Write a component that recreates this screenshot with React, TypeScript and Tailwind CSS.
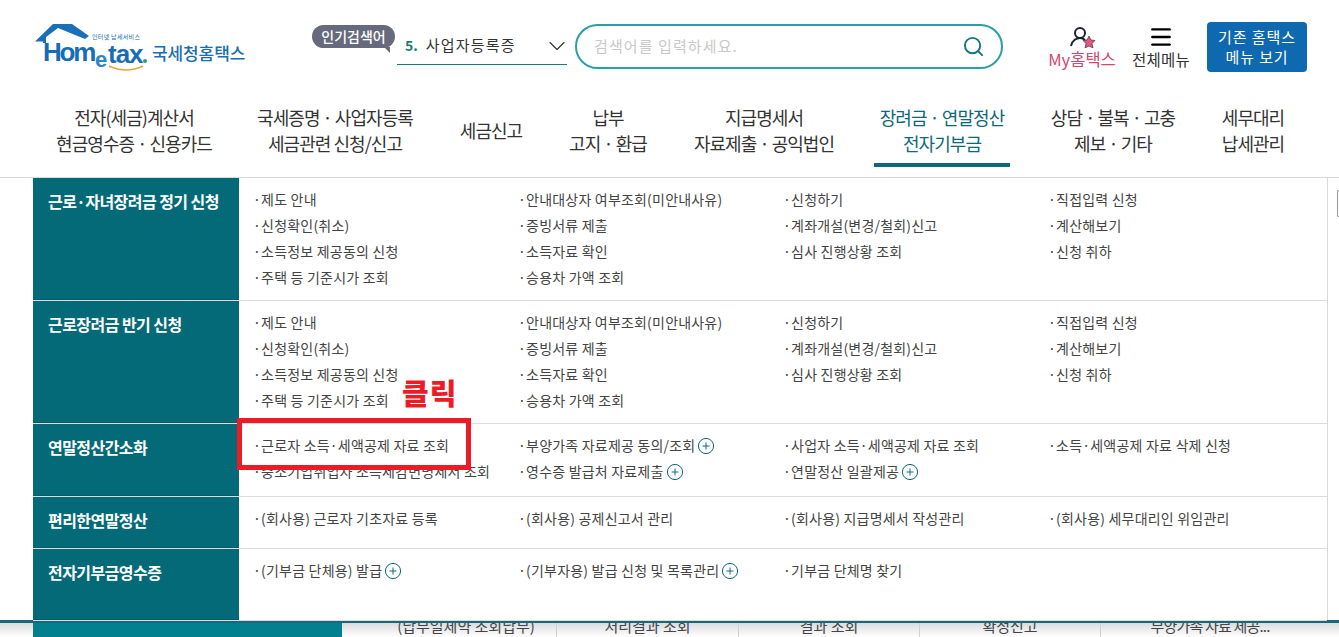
import { ChevronDown, Menu, Search } from 'lucide-react'

const FONT = "font-['Noto_Sans_CJK_KR','Noto_Sans',sans-serif]"

const NAV = [
  { a: '전자(세금)계산서', b: '현금영수증 · 신용카드', w: 'w-[166px]', ml: 'ml-[51px]' },
  { a: '국세증명 · 사업자등록', b: '세금관련 신청/신고', w: 'w-[190px]', ml: 'ml-[23px]' },
  { a: '세금신고', b: '', w: 'w-[70px]', ml: 'ml-[26px]' },
  { a: '납부', b: '고지 · 환급', w: 'w-[90px]', ml: 'ml-[37px]' },
  { a: '지급명세서', b: '자료제출 · 공익법인', w: 'w-[150px]', ml: 'ml-[36px]' },
  { a: '장려금 · 연말정산', b: '전자기부금', w: 'w-[136px]', ml: 'ml-[35px]', active: true },
  { a: '상담 · 불복 · 고충', b: '제보 · 기타', w: 'w-[136px]', ml: 'ml-[35px]' },
  { a: '세무대리', b: '납세관리', w: 'w-[70px]', ml: 'ml-[37px]' },
]

type Item = { t: string; plus?: boolean }

const ROWS: { title: string; h: string; items: Item[] }[] = [
  {
    title: '근로·자녀장려금 정기 신청',
    h: 'h-[123px]',
    items: [
      { t: '제도 안내' }, { t: '안내대상자 여부조회(미안내사유)' }, { t: '신청하기' }, { t: '직접입력 신청' },
      { t: '신청확인(취소)' }, { t: '증빙서류 제출' }, { t: '계좌개설(변경/철회)신고' }, { t: '계산해보기' },
      { t: '소득정보 제공동의 신청' }, { t: '소득자료 확인' }, { t: '심사 진행상황 조회' }, { t: '신청 취하' },
      { t: '주택 등 기준시가 조회' }, { t: '승용차 가액 조회' },
    ],
  },
  {
    title: '근로장려금 반기 신청',
    h: 'h-[123px]',
    items: [
      { t: '제도 안내' }, { t: '안내대상자 여부조회(미안내사유)' }, { t: '신청하기' }, { t: '직접입력 신청' },
      { t: '신청확인(취소)' }, { t: '증빙서류 제출' }, { t: '계좌개설(변경/철회)신고' }, { t: '계산해보기' },
      { t: '소득정보 제공동의 신청' }, { t: '소득자료 확인' }, { t: '심사 진행상황 조회' }, { t: '신청 취하' },
      { t: '주택 등 기준시가 조회' }, { t: '승용차 가액 조회' },
    ],
  },
  {
    title: '연말정산간소화',
    h: 'h-[73px]',
    items: [
      { t: '근로자 소득·세액공제 자료 조회' }, { t: '부양가족 자료제공 동의/조회', plus: true }, { t: '사업자 소득·세액공제 자료 조회' }, { t: '소득·세액공제 자료 삭제 신청' },
      { t: '중소기업취업자 소득세감면명세서 조회' }, { t: '영수증 발급처 자료제출', plus: true }, { t: '연말정산 일괄제공', plus: true },
    ],
  },
  {
    title: '편리한연말정산',
    h: 'h-[52px]',
    items: [
      { t: '(회사용) 근로자 기초자료 등록' }, { t: '(회사용) 공제신고서 관리' }, { t: '(회사용) 지급명세서 작성관리' }, { t: '(회사용) 세무대리인 위임관리' },
    ],
  },
  {
    title: '전자기부금영수증',
    h: 'h-[72px]',
    items: [
      { t: '(기부금 단체용) 발급', plus: true }, { t: '(기부자용) 발급 신청 및 목록관리', plus: true }, { t: '기부금 단체명 찾기' },
    ],
  },
]

const STRIP = [
  { t: '(납부일제약 조회납부)', w: 'w-[215px]', cls: 'pl-[34px]' },
  { t: '처리결과 조회', w: 'w-[182px]', cls: '' },
  { t: '결과 조회', w: 'w-[181px]', cls: '' },
  { t: '확정신고', w: 'w-[181px]', cls: '' },
  { t: '부양가족 자료 제공...', w: 'w-[212px]', cls: 'pl-[6px] tracking-[-0.8px]' },
]

function PlusIcon() {
  return (
    <svg viewBox="0 0 18 18" className="ml-[2px] inline-block h-[18px] w-[18px] shrink-0 translate-y-[1px] text-[#0c6a78]">
      <circle cx="9" cy="9" r="7.6" fill="none" stroke="currentColor" strokeWidth="1" />
      <path d="M9 5.5v7M5.5 9h7" stroke="currentColor" strokeWidth="1" />
    </svg>
  )
}

function Logo() {
  return (
    <div className="relative h-[50px] w-[215px] font-['Liberation_Sans',sans-serif]">
      <svg viewBox="0 0 56 20" className="absolute left-0 top-0 h-[20px] w-[56px]">
        <path d="M0 17.5 L18 0 H37 L54 12 L50 15 L23 4 L11 13 V19 H8 V17.5 Z" fill="#1a70b8" />
      </svg>
      <span className="absolute left-[8px] top-[13px] text-[26px] font-bold leading-[30px] tracking-[-2.2px] text-[#176db5]">Hom</span>
      <span className="absolute left-[60px] top-[25px] text-[22px] font-bold leading-[22px] text-[#2a86c8]">e</span>
      <span className="absolute left-[73px] top-[15px] text-[26px] font-bold leading-[30px] tracking-[-1px] text-[#176db5]">tax</span>
      <span className="absolute left-[108px] top-[35px] h-[4px] w-[4px] rounded-full bg-[#2f9e6c]" />
      <svg viewBox="0 0 36 8" className="absolute left-[73px] top-[41px] h-[8px] w-[36px]">
        <path d="M1 1 Q18 9 35 1" fill="none" stroke="#e9a43c" strokeWidth="1.5" />
      </svg>
      <span className={`absolute left-[57px] top-[9px] whitespace-nowrap text-[6px] leading-[7px] tracking-[0.3px] text-[#176db5] ${FONT}`}>
        인터넷 납세서비스
      </span>
      <span className={`absolute left-[117px] top-[19px] whitespace-nowrap text-[17px] font-medium leading-[20px] tracking-[-0.1px] text-[#1a6db0] ${FONT}`}>
        국세청홈택스
      </span>
    </div>
  )
}

function Header() {
  return (
    <div className="flex h-[100px] items-start">
      <div className="ml-[35px] mt-[24px] h-[50px] w-[215px] shrink-0">
        <Logo />
      </div>
      <div className="relative ml-[62px] mt-[25px] h-[23px] w-[83px] shrink-0 rounded-full bg-[#666a7c] text-center text-[14px] font-medium leading-[23px] text-white">
        <span className={FONT}>인기검색어</span>
        <span className="absolute bottom-[-5px] right-[5px] h-0 w-0 border-l-[6px] border-t-[6px] border-l-transparent border-t-[#666a7c]" />
      </div>
      <div className={`ml-[2px] mt-[27px] flex h-[38px] w-[170px] shrink-0 items-center border-b border-[#1b7a80] pl-[8px] text-[15px] text-[#333] ${FONT}`}>
        <span className="mr-[8px] text-[14px] font-bold text-[#1d7a74]">5.</span>
        <span className="tracking-[1.2px]">사업자등록증</span>
        <ChevronDown size={28} strokeWidth={1} className="-mr-[4px] ml-auto text-[#333]" />
      </div>
      <div className="ml-[8px] mt-[24px] flex h-[45px] w-[428px] shrink-0 items-center justify-between rounded-full border-2 border-[#2aa0a5] pl-[17px] pr-[16px]">
        <span className={`text-[15px] tracking-[1.1px] text-[#c8c8c8] ${FONT}`}>검색어를 입력하세요.</span>
        <Search size={23} strokeWidth={2} className="text-[#16767c]" />
      </div>
      <div className={`ml-[41px] mt-[26px] flex w-[78px] shrink-0 flex-col items-center ${FONT}`}>
        <svg viewBox="0 0 28 22" className="h-[22px] w-[28px]">
          <circle cx="11" cy="7" r="5" fill="none" stroke="#1c2230" strokeWidth="2" />
          <path d="M2 20 C3 14 8 12 11 12 C13 12 15 13 16 14" fill="none" stroke="#1c2230" strokeWidth="2" />
          <path d="M20 10 l2 4 4 .5 -3 3 1 4.5 -4 -2 -4 2 1 -4.5 -3 -3 4 -.5z" fill="#e8557a" stroke="#1c2230" strokeWidth="0.6" />
        </svg>
        <span className="mt-[1px] -translate-x-[1px] whitespace-nowrap text-[16.5px] leading-[20px] text-[#d0486f]">My홈택스</span>
      </div>
      <div className={`ml-[6px] mt-[24px] flex w-[66px] shrink-0 flex-col items-center ${FONT}`}>
        <Menu size={26} strokeWidth={2.2} className="text-black" />
        <span className="mt-[-1px] whitespace-nowrap text-[15.5px] tracking-[0.3px] leading-[20px] text-[#333]">전체메뉴</span>
      </div>
      <div className={`ml-[13px] mt-[22px] flex h-[50px] w-[100px] shrink-0 flex-col items-center justify-center rounded-[4px] bg-[#0f69b0] text-[15px] leading-[20px] tracking-[0.9px] text-white ${FONT}`}>
        <span>기존 홈택스</span>
        <span>메뉴 보기</span>
      </div>
    </div>
  )
}

function Nav() {
  return (
    <div className={`flex h-[78px] items-start border-b border-[#d9d9d9] ${FONT}`}>
      {NAV.map((n) => (
        <div key={n.a} className={`${n.ml} ${n.w} flex h-[67px] shrink-0 flex-col items-center justify-start whitespace-nowrap pt-[4px] text-[18px] leading-[26px] tracking-[-0.95px] ${n.active ? 'border-b-[4px] border-[#0c6a78] text-[#0c6a78]' : 'text-[#333]'}`}>
          {n.b ? (
            <>
              <span>{n.a}</span>
              <span>{n.b}</span>
            </>
          ) : (
            <span className="mt-[13px]">{n.a}</span>
          )}
        </div>
      ))}
    </div>
  )
}

function MenuTable() {
  return (
    <div className={`relative ml-[33px] h-[442px] w-[1295px] border-r border-[#d9d9d9] ${FONT}`}>
      {ROWS.map((r) => (
        <div key={r.title} className={`flex ${r.h} border-b border-[#dcdcdc] last:border-b-0`}>
          <div className="w-[206px] shrink-0 border-b border-[#0a5a68] bg-[#046a78] pl-[15px] pt-[12px] text-[16px] font-bold leading-[22px] tracking-[-0.55px] text-white">
            {r.title}
          </div>
          <div className="grid flex-1 grid-cols-[265px_265px_265px_265px] content-start pl-[14px] pt-[8px]">
            {r.items.map((it, i) => (
              <div key={i} className="flex h-[26px] items-center whitespace-nowrap text-[14px] tracking-[0.2px] text-[#444]">
                <span>·{it.t}</span>
                {it.plus && <PlusIcon />}
              </div>
            ))}
          </div>
        </div>
      ))}
      <div className="absolute left-[204px] top-[240px] h-[52px] w-[234px] border-[5px] border-[#ed1c24]" />
      <span className="absolute left-[369px] top-[197px] text-[29px] font-black leading-[34px] tracking-[1px] text-[#ed1c24]">클릭</span>
    </div>
  )
}

function BottomStrip() {
  return (
    <div className={`flex h-[17px] overflow-hidden border-t-[3px] border-[#16687a] bg-gradient-to-b from-[#dcdcdc] to-white ${FONT}`}>
      <div className="ml-[33px] w-[309px] shrink-0 bg-[#03808f]" />
      {STRIP.map((s) => (
        <div key={s.t} className={`${s.w} ${s.cls} shrink-0 border-r border-[#d0d0d0] text-center text-[15px] leading-[14px] text-[#444] last:border-r-0`}>
          <span className="block -translate-y-[4px]">{s.t}</span>
        </div>
      ))}
    </div>
  )
}

export default function App() {
  return (
    <div className="relative h-[637px] w-[1339px] overflow-hidden bg-white">
      <Header />
      <Nav />
      <MenuTable />
      <BottomStrip />
      <span className="absolute left-[1337px] top-[190px] h-[27px] w-[2px] rounded-l-[3px] border border-r-0 border-[#999]" />
    </div>
  )
}
